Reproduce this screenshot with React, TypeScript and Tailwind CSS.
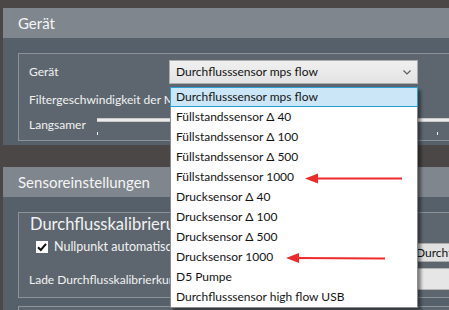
const sensors = [
  "Durchflusssensor mps flow",
  "Füllstandssensor Δ 40",
  "Füllstandssensor Δ 100",
  "Füllstandssensor Δ 500",
  "Füllstandssensor 1000",
  "Drucksensor Δ 40",
  "Drucksensor Δ 100",
  "Drucksensor Δ 500",
  "Drucksensor 1000",
  "D5 Pumpe",
  "Durchflusssensor high flow USB",
];

function SectionHeader({ title }: { title: string }) {
  return (
    <div className="h-[30px] bg-[#80868d] pl-[15px] flex items-center text-[15px] text-[#f5f5f5]">
      {title}
    </div>
  );
}

function DeviceSection() {
  return (
    <section className="ml-[3px] mt-[8px]">
      <SectionHeader title="Gerät" />
      <div className="h-[107px] bg-[#56606a] pt-[15px] pl-[15px]">
        <div className="w-[470px] h-[88px] border border-[#8b9298] bg-[#5d666f] pl-[10px] pt-[6px] flex flex-col text-[12px] text-[#f2f2f2]">
          <div className="flex items-center h-[24px]">
            <span className="w-[140px] shrink-0">Gerät</span>
            <div className="w-[249px] h-[24px] shrink-0 border border-[#acacac] bg-gradient-to-b from-[#f0f0f0] to-[#e3e3e3] flex items-center justify-between pl-[6px] pr-[6px] text-[#111]">
              <span>Durchflusssensor mps flow</span>
              <svg width="8" height="5" viewBox="0 0 8 5" className="mt-[1px]">
                <path d="M0.5 0.5 L4 4 L7.5 0.5" fill="none" stroke="#5a5a5a" strokeWidth="1.2" />
              </svg>
            </div>
          </div>
          <div className="h-[20px] mt-[6px] w-[141px] overflow-hidden flex items-center whitespace-nowrap">
            Filtergeschwindigkeit der Messung
          </div>
          <div className="h-[20px] mt-[5px] flex">
            <span className="w-[68px] shrink-0 flex items-center">Langsamer</span>
            <div className="flex flex-col">
              <div className="mt-[3px] w-[360px] h-[4px] bg-[#ececec] border-y border-[#c9c9c9]" />
              <div className="mt-[10px] flex justify-between w-[341px]">
                <div className="w-[1px] h-[3px] bg-[#f0f0f0]" />
                <div className="w-[1px] h-[3px] bg-[#f0f0f0]" />
              </div>
            </div>
          </div>
        </div>
      </div>
    </section>
  );
}

function SensorSection() {
  return (
    <section className="ml-[3px] mt-[22px]">
      <SectionHeader title="Sensoreinstellungen" />
      <div className="h-[120px] bg-[#56606a] pt-[15px] pl-[15px]">
        <div className="w-[470px] h-[86px] border border-[#8b9298] bg-[#5d666f] flex text-[12px] text-[#f2f2f2]">
          <div className="w-[151px] shrink-0 overflow-hidden flex flex-col">
            <div className="pl-[11px] h-[22px] leading-[22px] text-[16.5px] whitespace-nowrap">
              Durchflusskalibrierung
            </div>
            <div className="pl-[17px] h-[20px] mt-[2px] flex items-center gap-[6px] whitespace-nowrap">
              <div className="w-[12px] h-[12px] shrink-0 bg-white flex items-center justify-center">
                <svg width="10" height="10" viewBox="0 0 10 10">
                  <path d="M1 5.2 L3.8 8 L9 1.8" fill="none" stroke="#111" strokeWidth="2" />
                </svg>
              </div>
              <span className="text-[12.5px]">Nullpunkt automatisch setzen</span>
            </div>
            <div className="pl-[10px] h-[20px] mt-[13px] flex items-center whitespace-nowrap">
              Lade Durchflusskalibrierkurve
            </div>
          </div>
          <div className="w-[225px] shrink-0" />
          <div className="flex flex-col pt-[30px]">
            <div className="w-[80px] h-[19px] bg-[#e1e1e1] border border-[#adadad] text-[#111] flex items-center pl-[20px] whitespace-nowrap overflow-hidden">
              Durchfl
            </div>
            <div className="w-[80px] h-[22px] mt-[6px] bg-[#e6e6e6] border border-[#b5b5b5]" />
          </div>
        </div>
        <div className="mt-[8px] w-[470px] h-[20px] border border-[#8b9298] bg-[#5d666f]" />
      </div>
    </section>
  );
}

function SensorList() {
  return (
    <div className="absolute left-[170px] top-[87px] w-[248px] border border-[#8c8c8c] bg-white shadow-[3px_3px_3px_rgba(0,0,0,0.45)] text-[12px] text-[#141414]">
      {sensors.map((s, i) => (
        <div
          key={s}
          className={
            i === 0
              ? "h-[20px] pl-[5px] flex items-center bg-[#cbe6f6] border border-[#2a9fd8] -mx-[1px] -mt-[1px]"
              : "h-[20px] pl-[5px] flex items-center"
          }
        >
          {s}
        </div>
      ))}
    </div>
  );
}

function Arrows() {
  return (
    <svg className="absolute inset-0" width="449" height="310" viewBox="0 0 449 310">
      <line x1="402" y1="178.5" x2="314" y2="178.5" stroke="#ee2b2b" strokeWidth="2" />
      <polygon points="305,178.5 318,173.5 318,183.5" fill="#ee2b2b" />
      <line x1="385" y1="258.5" x2="295" y2="258" stroke="#ee2b2b" strokeWidth="2" />
      <polygon points="286,258 299,253 299,263" fill="#ee2b2b" />
    </svg>
  );
}

export default function App() {
  return (
    <div className="relative w-[449px] h-[310px] overflow-hidden bg-[#4b4746] font-['Lato',sans-serif]">
      <DeviceSection />
      <SensorSection />
      <SensorList />
      <Arrows />
    </div>
  );
}
